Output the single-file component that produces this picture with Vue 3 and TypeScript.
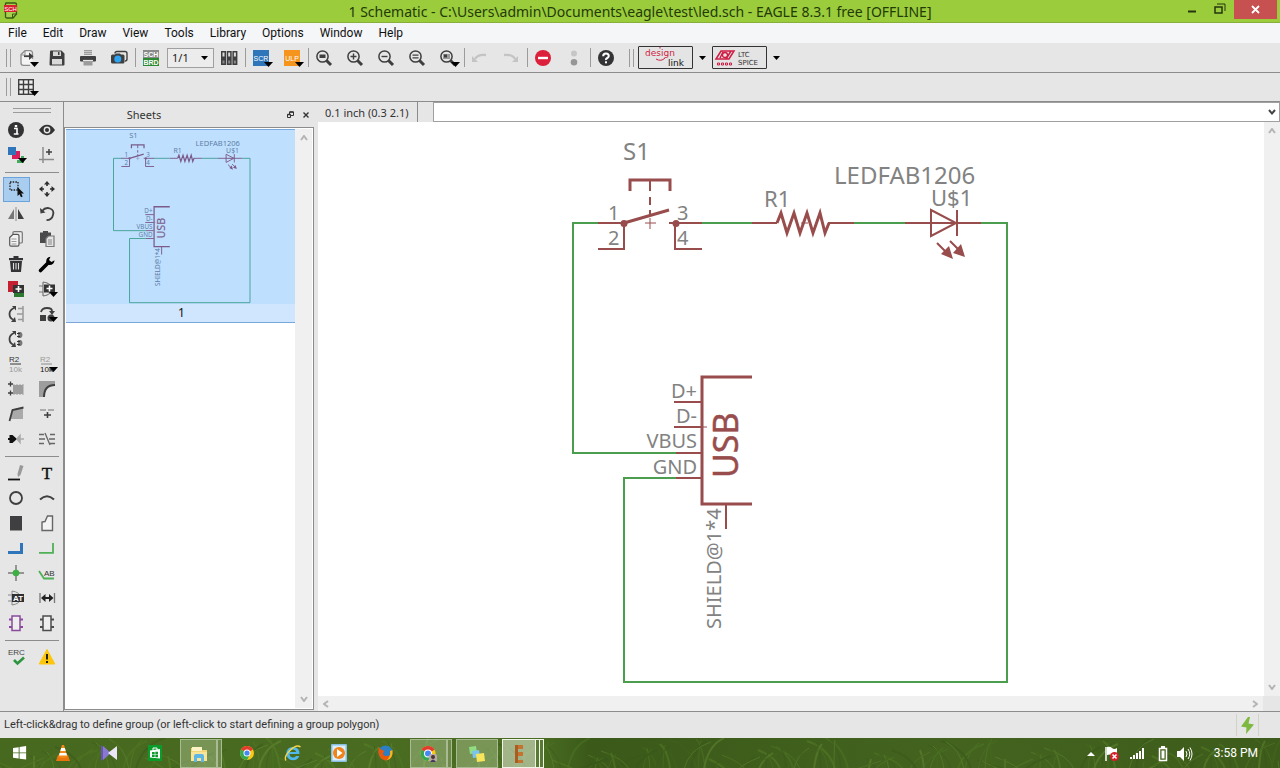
<script setup lang="ts">
interface Tool {
  icon: string
  label: string
  drop?: boolean
  active?: boolean
}

const D = '#3f3f41'

const lens = (inner: string): string =>
  `<circle cx="6.500" cy="6.500" r="5.600" fill="none" stroke="${D}" stroke-width="1.5"/><path d="M10.500 10.500L15 15" stroke="${D}" stroke-width="3"/>${inner}`

const icons: Record<string, string> = {
  open: `<path d="M12.500 9V3.500Q12.500 .7 10 .7H5L1 4.500V13Q1 15.300 3.500 15.300H10" fill="#f4f4f4" stroke="#8b8b8b" stroke-width="1.300"/><path d="M1.500 5H5V1" fill="none" stroke="#8b8b8b"/><path d="M4 6.200h6" stroke="${D}" stroke-width="1.800"/><path d="M9 2.500l4.500 3.700L9 10z" fill="${D}"/>`,
  save: `<path d="M1 1.500Q1 .5 2 .5H12.500L15.500 3.500V14.500Q15.500 15.500 14.500 15.500H1.500Q.5 15.500 .5 14.500z" fill="${D}"/><rect x="4" y="1.500" width="8" height="4.500" fill="#d9d9d9"/><rect x="3" y="9" width="10" height="5.500" fill="#d9d9d9"/><path d="M9 2h1.500v3H9z" fill="${D}"/>`,
  print: `<path d="M4 0h8v5H4z" fill="#9b9b9b"/><path d="M4 1.500h8M4 3.500h8" stroke="#c9c9c9"/><rect y="6" width="16" height="5.500" rx="1" fill="${D}"/><path d="M3.500 11.500h9v4h-9z" fill="#9b9b9b"/><path d="M3 10.500h10" stroke="#e6e6e6" stroke-width="1.200"/>`,
  camera: `<path d="M4 3.500Q4 1.500 6 1.500H14Q16 1.500 16 3.500V9Q16 11 14 11" fill="none" stroke="${D}" stroke-width="1.400"/><path d="M0 6Q0 4.500 1.500 4.500H4L5 3.500H9L10 4.500H12Q13.500 4.500 13.500 6V12Q13.500 13.500 12 13.500H1.500Q0 13.500 0 12z" fill="${D}"/><circle cx="6.800" cy="9" r="3.500" fill="#2ea3f2"/>`,
  schbrd: `<rect width="16" height="8" fill="#8a8a8a"/><rect y="8" width="16" height="8" fill="#2d8a34"/><text x="8" y="7" text-anchor="middle" font-size="7" fill="#fff" font-weight="700">SCH</text><text x="8" y="14.700" text-anchor="middle" font-size="7" fill="#fff" font-weight="700">BRD</text>`,
  lib: `<rect y="1" width="5" height="14" fill="${D}"/><rect x="5.700" y="1" width="5" height="14" fill="${D}"/><rect x="11.400" y="1" width="5" height="14" fill="${D}"/><path d="M1.500 2.500h2v4h-2zM7.200 2.500h2v4h-2zM12.900 2.500h2v4h-2z" fill="#ddd"/><path d="M1.500 10.500h2v3h-2zM7.200 10.500h2v3h-2zM12.900 10.500h2v3h-2z" fill="#888"/>`,
  scr: `<rect width="16" height="16" fill="#2e75b9"/><text x="8" y="10.700" text-anchor="middle" font-size="7" fill="#fff">SCR</text>`,
  ulp: `<rect width="16" height="16" fill="#f6951d"/><text x="8" y="10.700" text-anchor="middle" font-size="7" fill="#fff">ULP</text>`,
  zfit: lens(`<rect x="3.500" y="4.500" width="6" height="3.500" fill="${D}"/>`),
  zin: lens(`<path d="M3.500 6.500h6M6.500 3.500v6" stroke="${D}" stroke-width="1.400"/>`),
  zout: lens(`<path d="M3.500 6.500h6" stroke="${D}" stroke-width="1.400"/>`),
  zeq: lens(`<path d="M3.500 5.200h6M3.500 7.800h6" stroke="${D}" stroke-width="1.300"/>`),
  zsel: lens(`<rect x="3" y="4" width="7" height="5" fill="#9a9a9a"/><rect x="4" y="4.500" width="3" height="3" fill="${D}"/>`),
  undo: `<path d="M3 9Q5.500 4 14 5" fill="none" stroke="#c4c4c4" stroke-width="2.400"/><path d="M0 6v6h6z" fill="#c4c4c4"/>`,
  redo: `<path d="M12 9Q9.500 4 1 5" fill="none" stroke="#c4c4c4" stroke-width="2.400"/><path d="M15 6v6H9z" fill="#c4c4c4"/>`,
  stop: `<circle cx="8" cy="8" r="8" fill="#dc1f3b"/><rect x="3" y="6.800" width="10" height="2.400" fill="#fff"/>`,
  dots: `<circle cx="8" cy="3.500" r="3" fill="#c6c6c6"/><circle cx="8" cy="12.200" r="3.300" fill="#969696"/>`,
  help: `<circle cx="8" cy="8" r="8" fill="#333335"/><path d="M5.200 6.200Q5.200 3.500 8 3.500T10.800 6Q10.800 7.200 9.300 8T8 10" fill="none" stroke="#fff" stroke-width="2"/><rect x="7" y="11.300" width="2" height="2" fill="#fff"/>`,
  grid: `<rect x=".7" y=".7" width="14.600" height="14.600" fill="#efefef" stroke="${D}" stroke-width="1.400"/><path d="M5.500 0v16M10.500 0v16M0 5.500h16M0 10.500h16" stroke="${D}" stroke-width="1.400"/>`,

  info: `<circle cx="8" cy="8" r="8" fill="#333335"/><path d="M6 6.500h3v5.500M5.800 12h4.700" fill="none" stroke="#fff" stroke-width="1.600"/><rect x="6.800" y="3" width="2.400" height="2.200" fill="#fff"/>`,
  eye: `<path d="M0 8Q3.500 2.800 8 2.800T16 8Q12.500 13.200 8 13.200T0 8z" fill="#333335"/><circle cx="8" cy="8" r="3.400" fill="#e6e6e6"/><circle cx="8" cy="8" r="2" fill="#333335"/>`,
  layers: `<path d="M13 9h3v7h-7v-3h4z" fill="#43a95b"/><path d="M8 4h4v8H4V8h4z" fill="#d81e5b"/><rect width="8" height="8" fill="#2e75b9"/>`,
  mark: `<path d="M4 0v16M0 12.500h15" stroke="#8c8c8c" stroke-width="1.500"/><path d="M10 2v6M7 5h6" stroke="${D}" stroke-width="1.500"/>`,
  group: `<rect x="2" y="1" width="8" height="8" fill="none" stroke="#222" stroke-width="1.300" stroke-dasharray="1.500 1.200"/><path d="M9.500 6v9l2-1.800 1.500 3 1.700-.8-1.400-2.900H16z" fill="#111"/>`,
  move: `<path d="M8 0l3 3.500H5zM8 16l3-3.500H5zM0 8l3.500-3v6zM16 8l-3.500-3v6z" fill="#2e2e30"/><path d="M7.200 3h1.600v2H7.200zM7.200 11h1.600v2H7.200zM3 7.200h2v1.600H3zM11 7.200h2v1.600h-2z" fill="#2e2e30"/>`,
  mirror: `<path d="M6 3v10H0z" fill="#777"/><path d="M10 3v10h6z" fill="${D}"/><path d="M8 1v14" stroke="#999" stroke-width="1.200"/>`,
  rotate: `<path d="M3 5Q6.500 .8 11 2.500T14 9Q13 14 7.500 14.200" fill="none" stroke="${D}" stroke-width="1.800"/><path d="M1 2l.5 5.500 5-1z" fill="${D}"/>`,
  copy: `<path d="M5 3V1.500Q5 .7 6 .7H13Q14.300 .7 14.300 2V11Q14.300 12 13 12H11" fill="#ededed" stroke="#777" stroke-width="1.200"/><path d="M1.700 6.500L5 3.300H9.500Q11 3.300 11 4.700V13.500Q11 15.200 9.500 15.200H3Q1.700 15.200 1.700 13.700z" fill="#f2f2f2" stroke="#555" stroke-width="1.200"/><path d="M3.500 8h5M3.500 10.500h5M3.500 13h5" stroke="#999"/>`,
  paste: `<path d="M1 1.500h3V0h5v1.500h3V12H1z" fill="#4a4a4c"/><path d="M7 7.500L9.500 5H15v10.500H7z" fill="#e4e4e4" stroke="#777" stroke-width="1.200"/><path d="M9 9h4M9 11h4M9 13h4" stroke="#888"/>`,
  trash: `<path d="M5.500 0h5v2H15v2.200H1V2h4.500z" fill="#333335"/><path d="M2 5h12l-1 11H3z" fill="#333335"/><path d="M5.500 7v6.500M8 7v6.500M10.500 7v6.500" stroke="#ddd" stroke-width="1.100"/>`,
  wrench: `<path d="M1.500 14.500L9 7" stroke="#000" stroke-width="3.600" stroke-linecap="round"/><path d="M11.500 .8Q7 1 7.200 6L10 9Q15.200 9.200 15.500 4.200L12.500 6 10 4z" fill="#000"/>`,
  add: `<rect y="0" width="10" height="11" fill="#c42032"/><rect x="6" y="10" width="10" height="6" fill="#2b7a30"/><rect x="5" y="4" width="11" height="8" fill="#333"/><path d="M7.500 8h6M10.500 5v6" stroke="#fff" stroke-width="1.600"/>`,
  pinadd: `<path d="M4 1v14M4 1Q12 2 13 8Q12 14 4 15M0 5h4M0 11h4" fill="none" stroke="#777" stroke-width="1.200"/><rect x="5" y="3.500" width="11" height="8" fill="#333"/><path d="M7.500 7.500h6M10.500 4.500v6" stroke="#fff" stroke-width="1.600"/>`,
  pinswap: `<path d="M6 2Q1.500 4 1.500 8T5 13.500" fill="none" stroke="${D}" stroke-width="1.800"/><path d="M4 0h4v4.500zM3 16h5l-1-5z" fill="${D}"/><path d="M15 0v16M10 2.500h5M9 8h6M10 13.500h5" stroke="#999" stroke-width="1.500"/>`,
  replace: `<path d="M2 6Q3 2 8 2T13 5" fill="none" stroke="${D}" stroke-width="1.800"/><path d="M10 5h6l-3 4z" fill="${D}"/><rect x="1" y="9" width="6" height="6" fill="${D}"/><circle cx="12" cy="12" r="3.500" fill="${D}"/>`,
  gateswap: `<path d="M6 2Q1.500 4 1.500 8T5 13.500" fill="none" stroke="${D}" stroke-width="1.800"/><path d="M4 0h4v4.500zM3 16h5l-1-5z" fill="${D}"/><path d="M10 1h3q3 3 0 6h-3zM10 9h3q3 3 0 6h-3z" fill="#777"/><path d="M9 2.500h3M9 5.500h3M9 10.500h3M9 13.500h3" stroke="#333"/>`,
  name: `<text x="1" y="6" font-size="8" fill="#333">R2</text><path d="M2 8h11" stroke="#555" stroke-width="1.200"/><text x="1" y="16" font-size="8" fill="#999">10k</text>`,
  value: `<text x="1" y="6" font-size="8" fill="#999">R2</text><path d="M2 8h11" stroke="#999" stroke-width="1.200"/><text x="1" y="16" font-size="8" fill="#111">10k</text>`,
  smash: `<rect x="5" y="4" width="10" height="9" fill="#9d9d9d"/><path d="M6 3v11M9 3v11M12 3v11M15 3v11" stroke="#9d9d9d"/><path d="M0 3h5M2.500 .5v5M0 12h5M2.500 9.500v5" stroke="${D}" stroke-width="1.300"/>`,
  miter: `<path d="M0 0h16v4Q5 5 5 16H0z" fill="#9d9d9d"/><path d="M5 16Q5 4 16 4" fill="none" stroke="${D}" stroke-width="2"/>`,
  split: `<path d="M4 3.500L15 1.500V13H2z" fill="#aaa"/><path d="M1.500 15L4.500 4 15.500 1.500" fill="none" stroke="${D}" stroke-width="1.800"/>`,
  optimize: `<path d="M1 4h6M9 4h6" stroke="#999" stroke-width="1.300"/><path d="M5 9h7M8.500 6v6" stroke="${D}" stroke-width="1.600"/>`,
  invoke: `<path d="M0 8h3" stroke="#111" stroke-width="2"/><path d="M1.500 4h3l4.500 4-4.500 4h-3z" fill="#111"/><path d="M9 8l3-3.500v7zM12 8h4" fill="#aaa" stroke="#aaa" stroke-width="1.500"/>`,
  paint: `<path d="M0 3.500h5M0 8h6M0 12.500h5M11 3.500h5M10 8h6M11 12.500h5" stroke="#666" stroke-width="1.500"/><path d="M6 2l5 12" stroke="#666" stroke-width="1.300"/>`,
  line: `<path d="M0 14.500h12" stroke="#111" stroke-width="1.800"/><path d="M12 0l3.500 1-3 9-2.500 2-.5-3z" fill="#999"/>`,
  text: `<text x="8" y="14" text-anchor="middle" font-size="17" fill="#111" style="font-family:'Liberation Serif',serif" stroke="#111" stroke-width=".4">T</text>`,
  circle: `<circle cx="8" cy="8" r="6" fill="none" stroke="${D}" stroke-width="1.800"/>`,
  arc: `<path d="M1 9.500Q8 3 15 9.500" fill="none" stroke="${D}" stroke-width="2"/>`,
  rect: `<rect x="2" y="1" width="12" height="14.500" fill="#3f3f41"/>`,
  poly: `<path d="M3 15.500V7L6 6.500 8.500 1H13.500V15.500z" fill="#f3f3f3" stroke="#666" stroke-width="1.400"/>`,
  bus: `<path d="M0 12.500h13.500V3" fill="none" stroke="#2e75b9" stroke-width="3"/>`,
  net: `<path d="M0 12.800h14V3" fill="none" stroke="#4fb056" stroke-width="1.800"/>`,
  junction: `<path d="M0 8h16M8 0v16" stroke="#7a7a7a" stroke-width="1.500"/><circle cx="8" cy="8" r="3.300" fill="#3cb043"/>`,
  label: `<path d="M0 6l5 7.500h10" fill="none" stroke="#4fb056" stroke-width="1.800"/><text x="5" y="11" font-size="8" fill="#333">AB</text>`,
  attr: `<path d="M4 1v14M4 1Q12 2 13 8Q12 14 4 15M0 5h4M0 11h4" fill="none" stroke="#888"/><rect x="4" y="4" width="12" height="8" fill="#2f2f31"/><text x="10" y="11" text-anchor="middle" font-size="8" font-weight="700" fill="#fff">AT</text>`,
  dim: `<path d="M1 3v10M15.500 3v10" stroke="#777" stroke-width="1.300"/><path d="M4 8h9" stroke="#222" stroke-width="2"/><path d="M2 8l4.500-4v8zM14.500 8L10 4v8z" fill="#222"/>`,
  gate: `<rect x="4" y="1" width="8" height="14.500" fill="#eee" stroke="#8a4a9c" stroke-width="1.500"/><path d="M1 4.500h3M1 12h3M12 4.500h3M12 12h3" stroke="#8a4a9c" stroke-width="1.800"/>`,
  part: `<rect x="4" y="1" width="8" height="14.500" fill="#eee" stroke="#4c4c4e" stroke-width="1.500"/><path d="M1 4.500h3M1 12h3M12 4.500h3M12 12h3" stroke="#4c4c4e" stroke-width="1.800"/>`,
  erc: `<text x="0" y="6" font-size="8" fill="#444">ERC</text><path d="M6 11l3.500 3.500L16 8.500" fill="none" stroke="#2f9440" stroke-width="2.600"/>`,
  warn: `<path d="M8 .5L15.800 15H.2z" fill="#fdc60b" stroke="#fdc60b" stroke-linejoin="round"/><path d="M8 5v5.500" stroke="#222" stroke-width="2"/><rect x="7" y="12" width="2" height="2" fill="#222"/>`,

  start: `<path d="M0 2.200l6.500-.9v6H0zM7.500 1.100L15 0v7.300H7.500zM0 8.300h6.500v6L0 13.400zM7.500 8.300H15v7.200l-7.500-1z" fill="#fff"/>`,
  vlc: `<path d="M3 10L1 16h14l-2-6z" fill="#e8760c"/><path d="M7 0h2l3.500 12q-4.500 2-9 0z" fill="#f58a1a"/><path d="M6.200 3h3.600l.9 3H5.300zM4.600 8h6.800l.6 2.500H4z" fill="#fff"/>`,
  kmp: `<path d="M0 0q3 2 5 5v6q-2 3-5 5z" fill="#6655b5"/><path d="M2 1l8 7-8 7z" fill="#8878cf"/><path d="M16 1v14L7 8z" fill="#eae6f7"/>`,
  store: `<rect x="1" width="14" height="16" fill="#0c9a2b"/><path d="M3 5.500L13 4v9.500L3 12.500z" fill="#fff"/><path d="M6 5V3h4v2" fill="none" stroke="#fff"/><path d="M5 7h2.700v2.200H5zM8.300 6.800H11v2.400H8.300zM5 9.800h2.700V12H5zM8.300 9.800H11v2.400H8.300z" fill="#0c9a2b"/>`,
  explorer: `<path d="M0 2h6l1 2h9v11H0z" fill="#f4d675"/><path d="M1 1h10v4H1z" fill="#fbf3c4"/><path d="M0 6h16v9H0z" fill="#f9e59a"/><path d="M3 16V10q0-2 2-2h6q2 0 2 2v6h-3v-4H6v4z" fill="#5eb6e4"/>`,
  chrome: `<circle cx="8" cy="8" r="7" fill="#fbc816"/><path d="M8 8L2 4.500A7 7 0 0 1 14 4.500z" fill="#e33b2e"/><path d="M8 8L2 4.500A7 7 0 0 0 8 15l3-5.500z" fill="#36a852"/><circle cx="8" cy="8" r="3.500" fill="#fff"/><circle cx="8" cy="8" r="2.600" fill="#4688f1"/>`,
  chromeuser: `<circle cx="7" cy="7.500" r="7.500" fill="#fbc816"/><path d="M7 7.500L.5 3.800a7.500 7.500 0 0 1 13 0z" fill="#e33b2e"/><path d="M7 7.500L.5 3.800A7.500 7.500 0 0 0 7 15l3.500-6z" fill="#36a852"/><circle cx="7" cy="7.500" r="4" fill="#fff"/><circle cx="7" cy="7.500" r="3" fill="#4688f1"/><rect x="8" y="8" width="8" height="8" rx="2" fill="#b9a9a4"/><circle cx="12" cy="11" r="2" fill="#4a3434"/><path d="M9 16q3-5 6 0z" fill="#47395c"/>`,
  ie: `<path d="M14.500 9H4.500Q5 12.500 8 12.500Q10 12.500 11 11h3.300Q12.500 15.300 8 15.300Q1.500 15 1.300 8.600Q1.700 2.300 8 2Q14.800 2.300 14.500 9zM4.700 7h6.500Q10.800 4.600 8 4.500T4.700 7z" fill="#4fb9ee"/><path d="M1 15.500Q-1.500 12 5 5.500T15.500 2" fill="none" stroke="#f7d44b" stroke-width="1.400"/>`,
  wmp: `<rect x="0" y="-1" width="16" height="18" rx="1" fill="#86bfe2"/><rect x="1.500" y=".5" width="13" height="15" fill="#dceef9"/><circle cx="8" cy="8" r="6" fill="#f0831a"/><path d="M6 4l5.500 4L6 12z" fill="#fff"/>`,
  firefox: `<circle cx="8.500" cy="7.500" r="7" fill="#2d7fc4"/><path d="M1.500 2Q0 14 8 15.500Q16 15.500 15.500 5Q14.500 11 10 11Q6 11.500 6 8L7.500 6 4 4.500z" fill="#e8590c"/><path d="M15.500 5Q16.500 14 9 15.500Q14 12 13 6z" fill="#fbb616"/>`,
  notes: `<path d="M0 1l7-1 1 7-7 1z" fill="#8fdc82"/><path d="M3 5l7-1 1 7-7 1z" fill="#7cc3ee"/><path d="M7 8l8-1 1 8-8 1z" fill="#f9e55c"/>`,
  eagle: `<path d="M4-1h8v4H7v3h5v4H7v4h5v3H4z" fill="#c4742f"/><path d="M4-1h3v18H4z" fill="#ab5c20"/>`,
}

const files: Tool[] = [
  { icon: 'save', label: 'Save' },
  { icon: 'print', label: 'Print' },
  { icon: 'camera', label: 'CAM Processor' },
]
const scripts: Tool[] = [
  { icon: 'scr', label: 'Execute script', drop: true },
  { icon: 'ulp', label: 'Run ULP', drop: true },
]
const zooms: Tool[] = [
  { icon: 'zfit', label: 'Fit' },
  { icon: 'zin', label: 'Zoom in' },
  { icon: 'zout', label: 'Zoom out' },
  { icon: 'zeq', label: 'Redraw' },
  { icon: 'zsel', label: 'Zoom select', drop: true },
]
const history: Tool[] = [
  { icon: 'undo', label: 'Undo' },
  { icon: 'redo', label: 'Redo' },
]
const control: Tool[] = [
  { icon: 'stop', label: 'Cancel' },
  { icon: 'dots', label: 'Go' },
]
const mainGroups: Tool[][] = [scripts, zooms, history, control, [{ icon: 'help', label: 'Help contents' }]]

const t = (icon: string, label: string, drop = false, active = false): Tool => ({ icon, label, drop, active })
const palette: Tool[][] = [
  [t('info', 'Info'), t('eye', 'Show'), t('layers', 'Layer settings', true), t('mark', 'Mark')],
  [
    t('group', 'Group', false, true), t('move', 'Move'), t('mirror', 'Mirror'), t('rotate', 'Rotate'),
    t('copy', 'Copy'), t('paste', 'Paste'), t('trash', 'Delete'), t('wrench', 'Change'),
    t('add', 'Add'), t('pinadd', 'Add gate', true), t('pinswap', 'Pinswap'), t('replace', 'Replace', true),
    t('gateswap', 'Gateswap'), t('', ''), t('name', 'Name'), t('value', 'Value', true),
    t('smash', 'Smash'), t('miter', 'Miter'), t('split', 'Split'), t('optimize', 'Optimize'),
    t('invoke', 'Invoke'), t('paint', 'Slice'),
  ],
  [
    t('line', 'Line'), t('text', 'Text'), t('circle', 'Circle'), t('arc', 'Arc'),
    t('rect', 'Rect'), t('poly', 'Polygon'), t('bus', 'Bus'), t('net', 'Net'),
    t('junction', 'Junction'), t('label', 'Label'), t('attr', 'Attribute'), t('dim', 'Dimension'),
    t('gate', 'Module'), t('part', 'Port'),
  ],
  [t('erc', 'ERC'), t('warn', 'Errors')],
]

const menus = ['File', 'Edit', 'Draw', 'View', 'Tools', 'Library', 'Options', 'Window', 'Help']

const tasks: { icon: string; label: string; open?: number; current?: boolean }[] = [
  { icon: 'vlc', label: 'VLC' },
  { icon: 'kmp', label: 'KMPlayer' },
  { icon: 'store', label: 'Store' },
  { icon: 'explorer', label: 'File Explorer', open: 2 },
  { icon: 'chrome', label: 'Chrome' },
  { icon: 'ie', label: 'Internet Explorer' },
  { icon: 'wmp', label: 'Media Player' },
  { icon: 'firefox', label: 'Firefox' },
  { icon: 'chromeuser', label: 'Chrome profile', open: 2 },
  { icon: 'notes', label: 'Sticky Notes', open: 1 },
  { icon: 'eagle', label: 'EAGLE', open: 3, current: true },
]

const tones = ['#5f8a2c', '#456c1c', '#6b9438', '#34571a', '#527c26']
const blades = Array.from({ length: 230 }, (_, i) => {
  const x = (i * 397) % 1280
  const lean = ((i * 53) % 61) - 30
  const top = (i * 29) % 24
  return {
    d: `M${x} 31Q${x + Math.round(lean / 5)} ${top + 7} ${x + lean} ${top}`,
    color: tones[i % tones.length],
    w: 1 + (i % 3 === 0 ? 1 : 0),
  }
})
</script>

<template>
  <div class="desktop">
    <header class="titlebar">
      <svg class="app-icon" viewBox="0 0 14 17" aria-hidden="true">
        <path d="M2 1h9q1.500 0 1.500 1.500V12L9 16H3q-1.500 0-1.500-1.500V2q0-1 .5-1z" fill="#a7d04f" stroke="#3a5a12" stroke-width="1.300" />
        <path d="M8.500 16v-4h4" fill="none" stroke="#3a5a12" />
        <rect y="3" width="13" height="7" fill="#d8232f" />
        <text x="6.500" y="9" text-anchor="middle" font-size="6" fill="#fff">SCH</text>
      </svg>
      <h1>1 Schematic - C:\Users\admin\Documents\eagle\test\led.sch - EAGLE 8.3.1 free [OFFLINE]</h1>
      <div class="window-buttons">
        <button aria-label="Minimize"><svg width="11" height="12" viewBox="0 0 11 12"><path d="M0 8.500h8" stroke="#26340f" stroke-width="2" /></svg></button>
        <button aria-label="Restore"><svg width="12" height="12" viewBox="0 0 12 12" fill="none" stroke="#26340f"><path d="M1 4h7v6H1z" stroke-width="1.500" /><path d="M3 1h8v7" /></svg></button>
        <button class="close" aria-label="Close"><svg width="9" height="9" viewBox="0 0 9 9"><path d="M1 1l7 7M8 1l-7 7" stroke="#fff" stroke-width="1.800" /></svg></button>
      </div>
    </header>

    <nav class="menubar">
      <button v-for="m in menus" :key="m">{{ m }}</button>
    </nav>

    <div class="toolbar">
      <span class="grip"></span>
      <button class="tool first" aria-label="Open">
        <svg class="ico" viewBox="-5 -5 25 25"><g v-html="icons.open" /><path d="M10 12h9l-4.500 5z" /></svg>
      </button>
      <button v-for="f in files" :key="f.icon" class="tool" :aria-label="f.label">
        <svg class="ico" viewBox="-4 -5 25 25" v-html="icons[f.icon]"></svg>
      </button>
      <span class="sep"></span>
      <button class="tool" aria-label="Switch to board"><svg class="ico" viewBox="-4 -5 25 25" v-html="icons.schbrd"></svg></button>
      <span class="combo">
        <select aria-label="Sheet"><option>1/1</option></select>
        <svg width="7" height="4" viewBox="0 0 7 4" aria-hidden="true"><path d="M0 0h7L3.500 4z" /></svg>
      </span>
      <button class="tool" aria-label="Use library"><svg class="ico" viewBox="-4 -5 25 25" v-html="icons.lib"></svg></button>
      <template v-for="(g, i) in mainGroups" :key="i">
        <span class="sep"></span>
        <button v-for="b in g" :key="b.icon" class="tool" :aria-label="b.label">
          <svg class="ico" viewBox="-4 -5 25 25"><g v-html="icons[b.icon]" /><path v-if="b.drop" d="M11 12h9l-4.500 5z" /></svg>
        </button>
      </template>
      <span class="grip second"></span>
      <button class="brand" aria-label="design link">
        <svg width="51" height="21" viewBox="0 0 51 21">
          <text class="brand-text" x="5" y="9" font-size="9" fill="#cf1d44">design</text>
          <text class="brand-text" x="28" y="19" font-size="9" fill="#111">link</text>
          <path d="M16 12q5 3 9-1M20 1.500v-1.500" fill="none" stroke="#cf1d44" />
        </svg>
      </button>
      <button class="arrow" aria-label="design link menu"><svg width="7" height="4" viewBox="0 0 7 4"><path d="M0 0h7L3.500 4z" /></svg></button>
      <button class="brand" aria-label="LTC SPICE">
        <svg width="51" height="21" viewBox="0 0 51 21">
          <path d="M2 12L7 4h13l-5 8zM6 11l3-6M12 12l5-8" fill="none" stroke="#cf1d44" stroke-width="1.500" />
          <circle cx="11" cy="8" r="2.500" fill="none" stroke="#cf1d44" stroke-width="1.300" />
          <path d="M3.500 16h2v2h-2zM7.500 16h2v2h-2zM11.500 16h2v2h-2zM15.500 16h2v2h-2z" fill="none" stroke="#cf1d44" />
          <text class="brand-text" x="24" y="10" font-size="7" fill="#333">LTC</text>
          <text class="brand-text" x="24" y="18" font-size="7" fill="#333">SPICE</text>
        </svg>
      </button>
      <button class="arrow" aria-label="LTC SPICE menu"><svg width="7" height="4" viewBox="0 0 7 4"><path d="M0 0h7L3.500 4z" /></svg></button>
    </div>

    <div class="toolbar">
      <span class="grip"></span>
      <button class="tool first" aria-label="Grid">
        <svg class="ico" viewBox="-3 -4 25 25"><g v-html="icons.grid" /><path d="M12 12h9l-4.500 5z" /></svg>
      </button>
    </div>

    <main class="work">
      <aside class="palette">
        <div class="palette-grip"></div>
        <template v-for="(g, i) in palette" :key="i">
          <hr v-if="i > 0" />
          <div class="palette-group">
            <template v-for="(b, j) in g" :key="j">
              <button v-if="b.icon" :class="{ active: b.active }" :aria-label="b.label">
                <svg viewBox="-4 -4 25 25"><g v-html="icons[b.icon]" /><path v-if="b.drop" d="M10 11h9l-4.500 5z" /></svg>
              </button>
              <span v-else></span>
            </template>
          </div>
        </template>
      </aside>

      <section class="sheets">
        <div class="dock-title">
          <h2>Sheets</h2>
          <button aria-label="Float"><svg width="7" height="7" viewBox="0 0 7 7" fill="none" stroke="#333"><path d="M.5 3.500h3v3h-3zM2.500 3V1h4v3.500H4" /><path d="M.5 3.500h3M2.500 1h4" stroke-width="1.500" /></svg></button>
          <button aria-label="Close dock"><svg width="6" height="6" viewBox="0 0 6 6"><path d="M.5 .5l5 5M5.500 .5l-5 5" stroke="#333" stroke-width="1.400" /></svg></button>
        </div>
        <div class="sheet-list">
          <button class="sheet">
            <svg class="thumb" viewBox="422 133 728 553"><use href="#circuit" /></svg>
            <span>1</span>
          </button>
          <div class="vscroll">
            <svg viewBox="0 0 8 6"><path d="M1 5l3-4 3 4" /></svg>
            <svg viewBox="0 0 8 6"><path d="M1 1l3 4 3-4" /></svg>
          </div>
        </div>
      </section>

      <section class="editor">
        <div class="command-row">
          <output>0.1 inch (0.3 2.1)</output>
          <div class="command">
            <input type="text" aria-label="Command line" />
            <button aria-label="Command history"><svg width="8" height="6" viewBox="0 0 8 6"><path d="M1 1l3 3.500L7 1" fill="none" stroke="#444" stroke-width="2" /></svg></button>
          </div>
        </div>
        <div class="canvas-row">
          <svg class="canvas" viewBox="318 122 946 574">
            <g id="circuit">
              <g class="wire">
                <path d="M600 223H573V453H676M676 478H624V682H1007V223H981M701 223H752M854 223H905" />
              </g>
              <g class="pin">
                <path d="M598 223H624V249H598M702 249H675V223M669 223H702M752 223H777M828 223H854M905 223H981M674 402H701M674 427H701M676 453H701M676 478H701M726 504V529" />
              </g>
              <g class="body">
                <path d="M630 191V180H670V191M752 377H702V504H752" />
                <path d="M777 223L781 213 787 233 794 213 800 233 807 213 813 233 820 213 825 233 829 223" />
                <path d="M624 223L669 210" />
              </g>
              <g class="pin">
                <path d="M931 210V236L956 223zM957 210V236" />
                <path d="M650 180V191M650 197V205M650 210V216" />
                <path d="M937 243L949 255M950 241L962 253" />
              </g>
              <path class="fine" d="M645 223H656M650 218V229M701 427H707M801 223H808M941 223H952" />
              <g class="solid">
                <circle cx="624" cy="223.500" r="3.500" /><circle cx="676" cy="223.500" r="3.500" />
                <path d="M953 259L941 254 949 246zM965 257L953 253 961 244z" />
              </g>
              <g class="names">
                <text x="623" y="160" font-size="24">S1</text>
                <text x="834" y="184" font-size="24">LEDFAB1206</text>
                <text x="931" y="206" font-size="22">U$1</text>
                <text x="764" y="207" font-size="22">R1</text>
                <text x="608" y="220" font-size="20">1</text>
                <text x="608" y="245" font-size="20">2</text>
                <text x="677" y="220" font-size="20">3</text>
                <text x="677" y="245" font-size="20">4</text>
                <text x="697" y="398" font-size="20" text-anchor="end">D+</text>
                <text x="697" y="423" font-size="20" text-anchor="end">D-</text>
                <text x="697" y="448" font-size="20" text-anchor="end">VBUS</text>
                <text x="697" y="474" font-size="20" text-anchor="end">GND</text>
                <text transform="translate(721 629) rotate(-90)" font-size="20">SHIELD@1*4</text>
              </g>
              <text class="usb" transform="translate(738 478) rotate(-90)" font-size="34">USB</text>
            </g>
          </svg>
          <div class="vscroll">
            <svg viewBox="0 0 8 6"><path d="M1 5l3-4 3 4" /></svg>
            <svg viewBox="0 0 8 6"><path d="M1 1l3 4 3-4" /></svg>
          </div>
        </div>
        <div class="hscroll">
          <svg viewBox="0 0 6 8"><path d="M5 1l-4 3 4 3" /></svg>
          <svg viewBox="0 0 6 8"><path d="M1 1l4 3-4 3" /></svg>
        </div>
      </section>
    </main>

    <div class="statusbar">
      <span>Left-click&amp;drag to define group (or left-click to start defining a group polygon)</span>
      <span class="bolt"><svg width="13" height="17" viewBox="0 0 13 17"><path d="M7 0L0 9.500l5.500 1L5 17l8-9.500-5.500-1L9 0z" fill="#7cb93e" /></svg></span>
    </div>

    <footer class="taskbar">
      <svg class="grass" viewBox="0 0 1280 30" preserveAspectRatio="none" aria-hidden="true">
        <path v-for="(b, i) in blades" :key="i" :d="b.d" :stroke="b.color" :stroke-width="b.w" fill="none" />
      </svg>
      <button class="start" aria-label="Start"><svg viewBox="0 0 16 16" v-html="icons.start"></svg></button>
      <button
        v-for="k in tasks" :key="k.label" class="task" :aria-label="k.label"
        :class="{ open: k.open, stack: (k.open ?? 0) > 1, current: k.current }"
      >
        <svg viewBox="-1 -1 18 18" v-html="icons[k.icon]"></svg>
      </button>
      <div class="tray">
        <svg width="8" height="30" viewBox="0 0 8 30"><path d="M0 18h8L4 14z" fill="#fff" /></svg>
        <svg width="16" height="30" viewBox="0 0 16 30"><path d="M2 9v14" stroke="#fff" stroke-width="1.500" /><path d="M3 9q3-1 5 1t5 0v7q-3 1-5 0t-5 0z" fill="#fff" /><circle cx="10.500" cy="18.500" r="4.500" fill="#d3202b" /><path d="M8.500 16.500l4 4M12.500 16.500l-4 4" stroke="#fff" stroke-width="1.500" /></svg>
        <svg width="16" height="30" viewBox="0 0 16 30"><path d="M2 21v-2M5 21v-4M8 21v-6M11 21v-8M14 21V10" stroke="#fff" stroke-width="2" /></svg>
        <svg class="battery" width="10" height="30" viewBox="0 0 10 30"><path d="M1.500 10.500h7v12h-7z" fill="none" stroke="#fff" stroke-width="1.500" /><path d="M3.500 12.500h3v8h-3zM3 8h4v2H3z" fill="#fff" /></svg>
        <svg width="16" height="30" viewBox="0 0 16 30"><path d="M0 13h3l4-4v14l-4-4H0z" fill="#fff" /><path d="M9 13q2 3 0 6M11 11q3.500 5 0 10M13 9.500q4 6.500 0 13" fill="none" stroke="#fff" /></svg>
        <time>3:58 PM</time>
      </div>
    </footer>
  </div>
</template>

<style>
body {
  margin: 0;
}
</style>

<style scoped>
* {
  box-sizing: border-box;
}
.desktop {
  display: flex;
  flex-direction: column;
  height: 100vh;
  overflow: hidden;
  background: #e6e6e6;
  color: #333;
  font: 11px/16px "Noto Sans", sans-serif;
}
button {
  border: 0;
  margin: 0;
  padding: 0;
  background: none;
  color: inherit;
  font: inherit;
}
svg {
  display: block;
  font-family: "Liberation Sans", sans-serif;
}
.titlebar {
  display: grid;
  grid-template-columns: 100px 1fr 100px;
  flex: none;
  height: 23px;
  background: #9acc3c;
  border-bottom: 1px solid #86b03a;
}
.app-icon {
  width: 14px;
  height: 17px;
  margin: 2px 0 0 4px;
}
h1 {
  margin: 0;
  color: #243a08;
  font: 14px/23px "Noto Sans", sans-serif;
  text-align: center;
  white-space: nowrap;
}
.window-buttons {
  display: flex;
  justify-content: flex-end;
  align-items: flex-start;
  padding-right: 3px;
}
.window-buttons button {
  display: grid;
  place-items: center;
  width: 28px;
  height: 18px;
}
.window-buttons .close {
  width: 45px;
  height: 19px;
  background: #c75050;
}
.menubar {
  display: flex;
  flex: none;
  height: 20px;
  background: #f5f6f8;
}
.menubar button {
  padding: 0 8px;
  color: #111;
  font: 12px/21px Roboto, sans-serif;
}
.toolbar {
  display: flex;
  align-items: center;
  flex: none;
  height: 30px;
  border-bottom: 1px solid #8c8c8c;
}
.toolbar + .toolbar {
  height: 29px;
}
.grip {
  width: 5px;
  height: 18px;
  margin: 0 2px 0 6px;
  border: solid #9b9b9b;
  border-width: 0 1px;
}
.grip.second {
  margin: 0 4px 0 7px;
}
.tool {
  display: grid;
  place-items: center;
  width: 31px;
  height: 29px;
}
.toolbar + .toolbar .tool {
  height: 28px;
}
.tool.first {
  width: 29px;
}
.ico {
  width: 25px;
  height: 25px;
}
.sep {
  width: 1px;
  height: 19px;
  background: #9b9b9b;
}
.combo {
  display: grid;
  align-items: center;
  width: 47px;
  height: 20px;
}
.combo > * {
  grid-area: 1 / 1;
}
.combo > svg {
  justify-self: end;
  margin-right: 6px;
  pointer-events: none;
}
select {
  appearance: none;
  width: 100%;
  height: 20px;
  padding: 0 4px;
  border: 1px solid #a0a0a0;
  border-radius: 0;
  background: #ececec;
  color: #222;
  font: inherit;
}
.brand {
  width: 55px;
  height: 23px;
  padding: 0 1px;
  border: 1px solid #333;
  border-radius: 1px;
  background: #e4e4e4;
}
.brand-text {
  font-family: "DejaVu Sans", sans-serif;
}
.arrow {
  display: grid;
  place-items: center;
  width: 19px;
  height: 23px;
}
.work {
  display: flex;
  flex: 1;
  min-height: 0;
}
.palette {
  flex: none;
  width: 64px;
  border-right: 1px solid #8c8c8c;
}
.palette-grip {
  height: 5px;
  margin: 6px 12px 5px 13px;
  border: solid #9b9b9b;
  border-width: 1px 0;
}
.palette-group {
  display: grid;
  grid-template-columns: 27px 27px;
  grid-auto-rows: 25px;
  column-gap: 4px;
  padding-left: 3px;
}
.palette hr {
  height: 1px;
  margin: 4px 4px 4px 5px;
  border: 0;
  background: #8c8c8c;
}
.palette button {
  width: 27px;
  height: 25px;
}
.palette button.active {
  background: #a9cdee;
  box-shadow: inset 0 0 0 1px #6ba3dc;
}
.palette svg {
  width: 25px;
  height: 25px;
  margin: 0 1px;
}
.sheets {
  display: flex;
  flex-direction: column;
  flex: none;
  width: 250px;
  padding-bottom: 1px;
}
.dock-title {
  display: flex;
  align-items: center;
  flex: none;
  height: 25px;
}
h2 {
  flex: 1;
  margin: 0;
  padding-right: 58px;
  font: inherit;
  text-align: center;
}
.dock-title button {
  display: grid;
  place-items: center;
  width: 16px;
}
.sheet-list {
  display: flex;
  flex: 1;
  min-height: 0;
  border: 1px solid #8c8c8c;
  background: #fff;
  padding: 1px;
}
.sheet {
  flex: 1;
  align-self: flex-start;
  border: solid #7aa7d9;
  border-width: 1px 0;
  background: #d0e6ff;
}
.sheet span {
  display: block;
  padding-left: 2px;
  color: #111;
  font-size: 12px;
  line-height: 18px;
}
.thumb {
  width: 100%;
  background: #bfdfff;
  --wire: #43a295;
  --part: #7b5b8a;
  --label: #5d80a6;
  --thin: 3px;
  --thick: 4px;
}
.vscroll {
  display: flex;
  flex-direction: column;
  justify-content: space-between;
  align-items: center;
  flex: none;
  width: 17px;
  padding: 6px 0;
  background: #f0f0f0;
}
.canvas-row .vscroll {
  width: 16px;
}
.vscroll svg,
.hscroll svg {
  fill: none;
  stroke: #b4b4b4;
  stroke-width: 2;
}
.vscroll svg {
  width: 8px;
  height: 6px;
}
.hscroll svg {
  width: 6px;
  height: 8px;
}
.editor {
  display: flex;
  flex-direction: column;
  flex: 1;
  min-width: 0;
  margin-left: 4px;
}
.command-row {
  display: flex;
  flex: none;
  height: 20px;
}
output {
  width: 100px;
  padding-left: 7px;
  border-right: 1px solid #8c8c8c;
  line-height: 22px;
  white-space: nowrap;
}
.command {
  display: flex;
  flex: 1;
  margin-left: 15px;
  border: 1px solid #a0a0a0;
  background: #fff;
}
.command input {
  flex: 1;
  min-width: 0;
  border: 0;
  padding: 0 4px;
  background: none;
  font: inherit;
}
.command button {
  display: grid;
  place-items: center;
  width: 14px;
}
.canvas-row {
  display: flex;
  flex: 1;
  min-height: 0;
}
.canvas {
  flex: 1;
  min-width: 0;
  background: #fff;
  --wire: #4b9e4e;
  --part: #984c4c;
  --label: #828282;
  --thin: 2px;
  --thick: 3px;
}
.wire,
.pin,
.body,
.fine {
  fill: none;
  stroke: var(--part);
  stroke-width: var(--thin);
}
.wire {
  stroke: var(--wire);
}
.body {
  stroke-width: var(--thick);
}
.fine {
  stroke-width: 1px;
}
.solid {
  fill: var(--part);
}
.names,
.usb {
  fill: var(--label);
  font-family: "Noto Sans", sans-serif;
}
.usb {
  fill: var(--part);
  stroke: var(--part);
  stroke-width: 0.5px;
}
.hscroll {
  display: flex;
  justify-content: space-between;
  align-items: center;
  flex: none;
  height: 15px;
  margin-right: 17px;
  padding: 0 5px;
  background: #f0f0f0;
}
.statusbar {
  display: flex;
  justify-content: space-between;
  align-items: center;
  flex: none;
  height: 27px;
  padding: 0 21px 0 4px;
  border-top: 1px solid #8c8c8c;
  font-family: Roboto, sans-serif;
}
.bolt {
  display: grid;
  place-items: center;
  width: 23px;
  height: 22px;
  border: solid #d2d2c8;
  border-width: 0 1px;
}
.taskbar {
  position: relative;
  display: flex;
  flex: none;
  height: 30px;
  background: linear-gradient(90deg, #47681f 0, #4a6d22 42%, #3b5a1a 46%, #43631f 75%, #3d5c1b 100%);
}
.grass {
  position: absolute;
  width: 100%;
  height: 100%;
  opacity: 0.4;
}
.start,
.task {
  position: relative;
  display: grid;
  place-items: center;
}
.start {
  width: 40px;
}
.start svg {
  width: 14px;
  height: 14px;
}
.task {
  width: 42px;
  margin: 0 2px;
}
.task svg {
  width: 18px;
  height: 18px;
}
.task.open {
  margin: 1px 2px 0;
  border: 1px solid #a9bb93;
  background: rgba(210, 225, 185, 0.35);
}
.task.stack {
  padding-right: 5px;
  box-shadow: inset -4px 0 0 -1px #6d8a4b, inset -5px 0 0 #a9bb93;
}
.task.current {
  padding-right: 9px;
  border-color: #f0f4e8;
  background: rgba(235, 240, 220, 0.55);
  box-shadow: inset -3px 0 0 #587a33, inset -4px 0 0 #f0f4e8, inset -7px 0 0 #587a33, inset -8px 0 0 #f0f4e8;
}
.tray {
  position: relative;
  display: flex;
  align-items: center;
  margin-left: auto;
  padding-right: 22px;
  color: #fff;
}
.tray svg {
  margin-right: 9px;
}
.tray svg.battery {
  margin: 0 9px 0 4px;
}
.tray time {
  margin-left: 12px;
  font: 12px/30px Roboto, sans-serif;
}
</style>
